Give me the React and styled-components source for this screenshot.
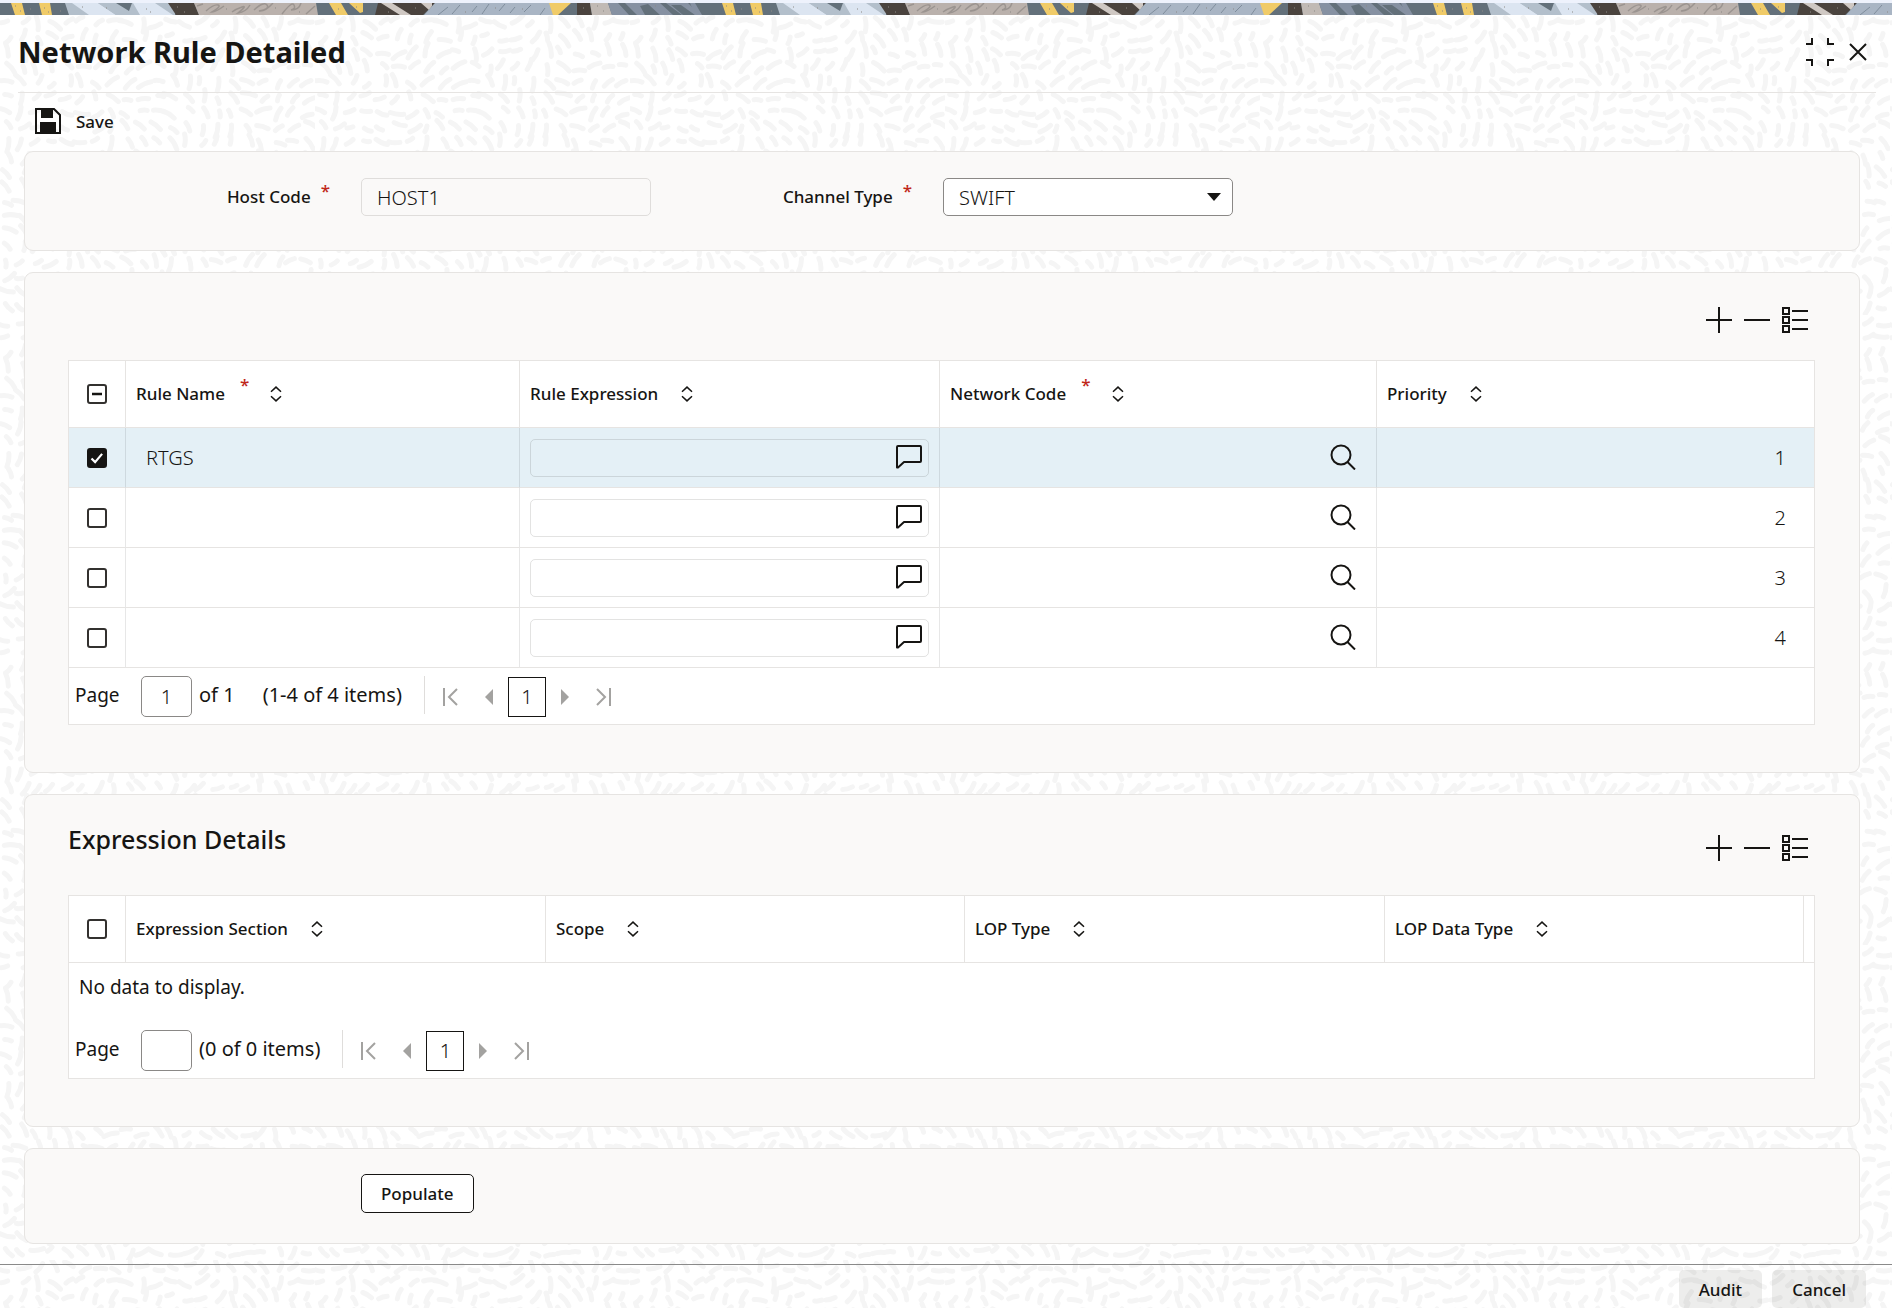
import React, { useEffect, useRef, useState } from 'react';
import styled, { createGlobalStyle } from 'styled-components';

const INK = '#161513';
const LINE = '#e6e4e2';
const MUTED = '#a3a2a0';

// faint brush strokes behind the page, one repeating tile
const TILE = 315;
const STEP = 15;

const brushTile = () => {
  const count = TILE / STEP;
  const turn = (2 * Math.PI) / TILE;
  let seed = 7;
  const random = () => {
    seed = (seed * 16807) % 2147483647;
    return seed / 2147483647;
  };
  let d = '';
  for (let row = 0; row < count; row += 1) {
    for (let col = 0; col < count; col += 1) {
      const x = col * STEP + random() * 7 + 4;
      const y = row * STEP + random() * 7 + 4;
      const angle =
        1.2 +
        1.3 * Math.sin(turn * 2 * x + 1.1 * Math.cos(turn * y)) +
        1.2 * Math.cos(turn * 2 * y + 1.4 * Math.sin(turn * x)) +
        (random() - 0.5) * 0.6;
      const half = 3 + random() * 4;
      const dx = Math.cos(angle) * half;
      const dy = Math.sin(angle) * half;
      const p = n => n.toFixed(1);
      d += `M${p(x - dx)} ${p(y - dy)}Q${p(x + dy / 4)} ${p(y - dx / 4)} ${p(
        x + dx
      )} ${p(y + dy)}`;
    }
  }
  const svg = `<svg xmlns="http://www.w3.org/2000/svg" width="${TILE}" height="${TILE}"><path d="${d}" fill="none" stroke="#f5f5f5" stroke-width="5" stroke-linecap="round"/></svg>`;
  return `data:image/svg+xml,${encodeURIComponent(svg)}`;
};

const BRUSH = brushTile();

const GlobalStyle = createGlobalStyle`
  *, *::before, *::after {
    box-sizing: border-box;
  }
  body {
    margin: 0;
    color: ${INK};
    background: #fff;
    font-family: 'Noto Sans', 'Open Sans', sans-serif;
    font-size: 17px;
  }
  button, input, select {
    font: inherit;
    color: inherit;
  }
`;

const Page = styled.div`
  display: flex;
  flex-direction: column;
  min-height: 100vh;
  background: #fff url("${BRUSH}");
`;

const Strip = styled.svg`
  display: block;
  width: 100%;
  height: 15px;
  flex: none;
`;

const Header = styled.header`
  display: flex;
  align-items: center;
  justify-content: space-between;
  height: 78px;
  margin: 0 16px 0 18px;
  padding-bottom: 3px;
  border-bottom: 1px solid ${LINE};
`;

const Title = styled.h1`
  margin: 0;
  font-size: 29px;
  line-height: 40px;
  font-weight: 700;
`;

const WindowActions = styled.div`
  display: flex;
  align-items: center;
  gap: 15px;
  padding-right: 9px;
`;

const IconButton = styled.button`
  display: flex;
  align-items: center;
  justify-content: center;
  padding: 0;
  border: 0;
  background: none;
  cursor: pointer;
`;

const Toolbar = styled.div`
  display: flex;
  align-items: center;
  height: 58px;
  padding: 0 35px 2px;
`;

const SaveButton = styled(IconButton)`
  gap: 15px;
  font-weight: 500;
`;

const Main = styled.main`
  display: flex;
  flex-direction: column;
  gap: 21px;
  margin: 0 32px 20px 24px;
`;

const Card = styled.section`
  border: 1px solid ${LINE};
  border-radius: 9px;
  background: #faf9f8;
`;

const FormCard = styled(Card)`
  display: grid;
  grid-template-columns: 336px 290px 292px 290px;
  align-items: center;
  padding: 26px 0 34px;
`;

const TableCard = styled(Card)`
  padding: 0 44px 47px 43px;
`;

const FieldLabel = styled.label`
  display: flex;
  justify-content: flex-end;
  gap: 10px;
  padding-right: 31px;
  line-height: 24px;
  font-weight: 500;
`;

const Required = styled.span`
  color: #c0271a;
  line-height: 12px;
`;

const TextInput = styled.input`
  width: 100%;
  height: 38px;
  padding: 0 15px;
  border: 1px solid #dfdddb;
  border-radius: 5px;
  background: transparent;
  font-size: 20px;
  font-weight: 300;
`;

const SelectBox = styled.div`
  position: relative;

  svg {
    position: absolute;
    top: 15px;
    right: 12px;
    pointer-events: none;
  }
`;

const Select = styled.select`
  width: 100%;
  height: 38px;
  padding: 0 15px;
  border: 1px solid #8a8886;
  border-radius: 5px;
  background: #fff;
  appearance: none;
  font-size: 20px;
  font-weight: 300;
`;

const CardHead = styled.div`
  display: flex;
  justify-content: space-between;
  align-items: flex-end;
  padding: ${({ $titled }) => ($titled ? '26px 0 33px' : '33px 0 26px')};
`;

const CardTitle = styled.h2`
  height: 41px;
  margin: 0;
  font-size: 25px;
  line-height: 36px;
  font-weight: 500;
`;

const CardActions = styled.div`
  display: flex;
  gap: 10px;
  margin-left: auto;
  padding-right: 6px;
`;

const Grid = styled.div`
  border: 1px solid ${LINE};
  background: #fff;
`;

const Table = styled.table`
  width: 100%;
  table-layout: fixed;
  border-collapse: separate;
  border-spacing: 0;
`;

const Col = styled.col`
  width: ${({ $width }) => ($width ? `${$width}px` : 'auto')};
`;

const HeadCell = styled.th`
  height: 67px;
  padding: 0 10px;
  border-bottom: 1px solid ${LINE};
  text-align: left;
  font-weight: 500;

  & + & {
    border-left: 1px solid ${LINE};
  }
`;

const HeadContent = styled.div`
  display: flex;
  align-items: center;
  gap: ${({ $required }) => ($required ? '15px' : '23px')};
  line-height: 24px;
`;

const HeadMark = styled(Required)`
  align-self: flex-start;
  margin-right: 6px;
  line-height: 6px;
`;

const Row = styled.tr`
  background: ${({ $selected }) => ($selected ? '#e4f0f6' : '#fff')};
`;

const Cell = styled.td`
  height: 60px;
  padding: 0 10px;
  border-bottom: 1px solid ${LINE};
  font-size: 20px;
  font-weight: 300;

  & + & {
    border-left: 1px solid rgba(22, 21, 19, 0.1);
  }
`;

const CellInput = styled.input`
  display: block;
  width: 100%;
  height: 38px;
  padding: 0 10px;
  border: 0;
  background: transparent;
  font-weight: inherit;
  text-align: ${({ $right }) => ($right ? 'right' : 'left')};
`;

const NumberCell = styled(Cell)`
  padding-right: 18px;
`;

const Expression = styled.div`
  display: flex;
  align-items: center;
  height: 38px;
  padding: 0 6px 2px 0;
  border: 1px solid rgba(22, 21, 19, 0.12);
  border-radius: 5px;
`;

const Lookup = styled.div`
  display: flex;
  align-items: center;
  padding: 0 10px 2px 0;
`;

const Check = styled.input`
  display: block;
  width: 20px;
  height: 20px;
  margin: 0 auto;
  border: 2px solid #33312f;
  border-radius: 3px;
  background: #fff center / 16px 16px no-repeat;
  appearance: none;

  &:checked {
    border-color: ${INK};
    background-color: ${INK};
    background-image: url("data:image/svg+xml,%3Csvg xmlns='http://www.w3.org/2000/svg' viewBox='0 0 16 16'%3E%3Cpath d='M2.5 8.5l3.6 3.6 7-8.2' fill='none' stroke='white' stroke-width='2.2'/%3E%3C/svg%3E");
  }

  &:indeterminate {
    background-image: url("data:image/svg+xml,%3Csvg xmlns='http://www.w3.org/2000/svg' viewBox='0 0 16 16'%3E%3Cpath d='M3 8h10' stroke='%23161513' stroke-width='2.4'/%3E%3C/svg%3E");
  }
`;

const Empty = styled.td`
  height: 59px;
  padding: 0 10px 12px;
  font-size: 19px;
`;

const Pager = styled.nav`
  display: flex;
  align-items: flex-start;
  height: 56px;
  padding: 8px 6px;
  font-size: 20px;
  line-height: 38px;
`;

const PageLabel = styled.label`
  width: 66px;
  font-size: 19px;
`;

const PageInput = styled.input`
  width: 51px;
  height: 41px;
  margin-right: 7px;
  border: 1px solid #8a8886;
  border-radius: 5px;
  background: #fff;
  text-align: center;
  font-weight: 300;
`;

const PageTotal = styled.span`
  margin-right: 28px;
`;

const Divider = styled.span`
  width: 1px;
  height: 38px;
  margin: 0 7px 0 22px;
  background: #dfdddb;
`;

const PageStep = styled(IconButton)`
  width: 38px;
  height: 42px;
`;

const PageNumber = styled.button`
  width: 38px;
  height: 40px;
  margin-top: 1px;
  padding: 0;
  border: 1px solid ${INK};
  background: #fff;
  font-weight: 300;
`;

const ActionCard = styled(Card)`
  padding: 25px 0 30px 336px;
`;

const OutlineButton = styled.button`
  display: block;
  height: 39px;
  padding: 0 19px;
  border: 1px solid ${INK};
  border-radius: 5px;
  background: #fff;
  font-weight: 500;
`;

const Footer = styled.footer`
  display: flex;
  justify-content: flex-end;
  gap: 10px;
  margin-top: auto;
  padding: 5px 26px 0;
  border-top: 1px solid #8a8a8a;
`;

const FooterButton = styled.button`
  height: 38px;
  padding: 0 20px;
  border: 0;
  border-radius: 5px;
  background: rgba(22, 21, 19, 0.08);
  font-weight: 500;
`;

const Icon = ({ w, h = w, children, ...rest }) => (
  <svg
    width={w}
    height={h}
    viewBox={`0 0 ${w} ${h}`}
    fill="none"
    stroke={INK}
    strokeWidth="2"
    aria-hidden="true"
    {...rest}
  >
    {children}
  </svg>
);

const CollapseIcon = () => (
  <Icon w={28}>
    <path d="M0 6h6V0M28 6h-6V0M0 22h6v6M28 22h-6v6" />
  </Icon>
);

const CloseIcon = () => (
  <Icon w={18}>
    <path d="M1 1l16 16M17 1L1 17" />
  </Icon>
);

const SaveIcon = () => (
  <Icon w={26}>
    <path d="M1 1h18l6 6v18H1z" />
    <path d="M6 0h12v10H6zM5 14h16v11H5z" fill={INK} stroke="none" />
  </Icon>
);

const PlusIcon = () => (
  <Icon w={28}>
    <path d="M1 14h26M14 1v26" />
  </Icon>
);

const MinusIcon = () => (
  <Icon w={28}>
    <path d="M1 14h26" />
  </Icon>
);

const ListIcon = () => (
  <Icon w={28}>
    <path d="M2 2h6v6H2zM2 11h6v6H2zM2 20h6v6H2zM11 5h16M11 14h16M11 23h16" />
  </Icon>
);

const CommentIcon = () => (
  <Icon w={26} h={24} strokeLinejoin="round">
    <path d="M2 1h22q1 0 1 1v14q0 1-1 1H8l-6 5.5H1V2q0-1 1-1z" />
  </Icon>
);

const SearchIcon = () => (
  <Icon w={26}>
    <circle cx="11" cy="11" r="9.5" />
    <path d="M17.5 18l7.5 7.5" />
  </Icon>
);

const SortIcon = () => (
  <Icon w={12} h={16} strokeWidth="1.5">
    <path d="M1 5.8l5-4.7 5 4.7M1 10.2l5 4.7 5-4.7" />
  </Icon>
);

const EdgeIcon = ({ last }) => (
  <Icon w={16} h={20} stroke={MUTED}>
    <path d={last ? 'M2 2l8 8-8 8M15 1v18' : 'M14 2l-8 8 8 8M1 1v18'} />
  </Icon>
);

const StepIcon = ({ next }) => (
  <Icon w={8} h={16} stroke="none" fill={MUTED}>
    <path d={next ? 'M0 0l8 8-8 8z' : 'M8 0L0 8l8 8z'} />
  </Icon>
);

const BannerStrip = () => (
  <Strip aria-hidden="true">
    <defs>
      <pattern id="banner" width="711" height="12" y="3" patternUnits="userSpaceOnUse">
        <rect width="711" height="12" fill="#63707a" />
        <path d="M65 0h110v12H69z" fill="#b3bfcb" />
        <path d="M72 0h26l18 12H89zM133 0h22l18 12h-33z" fill="#dce5f1" />
        <path d="M98 0h18l12 8 8 4h-20z" fill="#b3bfcb" />
        <path d="M116 0h16l-3 8z" fill="#63707a" />
        <path d="M11 0h11l3 12H15zM39 0h11l2 12H42zM329 0h12l7 12h-12zM349 0h14v9l-3 1z" fill="#f0cb68" />
        <path d="M168 0h26l5 12h-23z" fill="#4a433e" />
        <path d="M194 0h122l2 12H199z" fill="#bab1ac" />
        <path
          d="M197 3l6-2M206 8q8-7 12-6t-6 7q4 0 12-6M232 9q4-3 10-5t-4 6q8-1 12-8M254 7q10-9 13-5t-8 6q6 1 14-8M282 11q10-13 12-9t-3 5q8 0 10-7M306 11l9-8"
          fill="none"
          stroke="#9b9490"
          strokeWidth="1.5"
        />
        <path d="M378 0h57l-12 12h-48z" fill="#4a433e" />
        <path d="M381 0h11l19 12h-11zM421 0h11v3l-3 4z" fill="#cfc8c3" />
        <path d="M435 0h115l4 12H424z" fill="#a9b5c4" />
        <path
          d="M448 4l-10 8M460 2l-8 9M477 3l-5 6M489 1l-7 10M505 1l-6 7M515 4l-5 6M531 2l-7 7M545 5l-5 7"
          stroke="#7f8d9c"
        />
        <path d="M549 0h22l-13 12h-5z" fill="#f0cb68" />
        <path d="M577 0h13l2 12h-15z" fill="#4a433e" />
        <path d="M590 0h18l4 12h-20z" fill="#c1bab5" />
        <path d="M608 0h80l12 12h-88z" fill="#8691a2" />
        <path d="M618 0h7l12 12h-8zM640 3l8-2 12 11h-15zM660 0h6l16 12h-9zM671 2h10l14 10h-12z" fill="#63707a" />
        <path d="M690 0h5l7 12h-7z" fill="#8691a2" />
        <path
          d="M15 3h1M20 8h1M44 5h1M48 9h1M82 4h1M106 5h1M146 6h1M150 9h1M177 4h1M184 9h1M226 6h1M275 5h1M299 9h1M338 6h1M356 4h1M388 9h1M415 5h1M465 9h1M495 5h1M522 6h1M583 5h1M597 3h1M603 8h1M655 3h1M30 6h1M60 8h1"
          stroke="#8d8a86"
        />
      </pattern>
    </defs>
    <rect width="100%" height="3" fill="#eef2fc" />
    <rect y="3" width="100%" height="12" fill="url(#banner)" />
  </Strip>
);

const HeaderLabel = ({ title, required }) => (
  <HeadContent $required={required}>
    <span>{title}</span>
    {required && <HeadMark>*</HeadMark>}
    <IconButton aria-label={`Sort by ${title}`}>
      <SortIcon />
    </IconButton>
  </HeadContent>
);

const TableActions = () => (
  <CardActions>
    <IconButton aria-label="Add row">
      <PlusIcon />
    </IconButton>
    <IconButton aria-label="Delete row">
      <MinusIcon />
    </IconButton>
    <IconButton aria-label="Single record view">
      <ListIcon />
    </IconButton>
  </CardActions>
);

const TablePager = ({ id, page, total, summary }) => (
  <Pager aria-label="Pagination">
    <PageLabel htmlFor={id}>Page</PageLabel>
    <PageInput id={id} defaultValue={page} />
    {total && <PageTotal>{total}</PageTotal>}
    <span>{summary}</span>
    <Divider />
    <PageStep aria-label="First page">
      <EdgeIcon />
    </PageStep>
    <PageStep aria-label="Previous page">
      <StepIcon />
    </PageStep>
    <PageNumber>1</PageNumber>
    <PageStep aria-label="Next page">
      <StepIcon next />
    </PageStep>
    <PageStep aria-label="Last page">
      <EdgeIcon last />
    </PageStep>
  </Pager>
);

const initialRules = [
  { name: 'RTGS', priority: '1', selected: true },
  { name: '', priority: '2', selected: false },
  { name: '', priority: '3', selected: false },
  { name: '', priority: '4', selected: false }
];

const RulesTable = () => {
  const [rules, setRules] = useState(initialRules);
  const allRef = useRef(null);
  const picked = rules.filter(rule => rule.selected).length;
  const all = picked === rules.length;

  useEffect(() => {
    allRef.current.indeterminate = picked > 0 && !all;
  }, [picked, all]);

  const toggle = index =>
    setRules(
      rules.map((rule, i) =>
        i === index ? { ...rule, selected: !rule.selected } : rule
      )
    );

  return (
    <Table>
      <colgroup>
        <Col $width={56} />
        <Col $width={394} />
        <Col $width={420} />
        <Col $width={437} />
        <Col />
      </colgroup>
      <thead>
        <tr>
          <HeadCell>
            <Check
              type="checkbox"
              ref={allRef}
              aria-label="Select all rules"
              checked={all}
              onChange={() =>
                setRules(rules.map(rule => ({ ...rule, selected: !all })))
              }
            />
          </HeadCell>
          <HeadCell>
            <HeaderLabel title="Rule Name" required />
          </HeadCell>
          <HeadCell>
            <HeaderLabel title="Rule Expression" />
          </HeadCell>
          <HeadCell>
            <HeaderLabel title="Network Code" required />
          </HeadCell>
          <HeadCell>
            <HeaderLabel title="Priority" />
          </HeadCell>
        </tr>
      </thead>
      <tbody>
        {rules.map((rule, index) => (
          <Row key={rule.priority} $selected={rule.selected}>
            <Cell>
              <Check
                type="checkbox"
                aria-label={`Select rule ${index + 1}`}
                checked={rule.selected}
                onChange={() => toggle(index)}
              />
            </Cell>
            <Cell>
              <CellInput aria-label="Rule Name" defaultValue={rule.name} />
            </Cell>
            <Cell>
              <Expression>
                <CellInput aria-label="Rule Expression" readOnly />
                <IconButton aria-label="Open expression">
                  <CommentIcon />
                </IconButton>
              </Expression>
            </Cell>
            <Cell>
              <Lookup>
                <CellInput aria-label="Network Code" />
                <IconButton aria-label="Search network code">
                  <SearchIcon />
                </IconButton>
              </Lookup>
            </Cell>
            <NumberCell>
              <CellInput
                $right
                aria-label="Priority"
                defaultValue={rule.priority}
              />
            </NumberCell>
          </Row>
        ))}
      </tbody>
    </Table>
  );
};

const ExpressionTable = () => (
  <Table>
    <colgroup>
      <Col $width={56} />
      <Col $width={420} />
      <Col $width={419} />
      <Col $width={420} />
      <Col />
      <Col $width={11} />
    </colgroup>
    <thead>
      <tr>
        <HeadCell>
          <Check type="checkbox" aria-label="Select all expressions" />
        </HeadCell>
        {['Expression Section', 'Scope', 'LOP Type', 'LOP Data Type'].map(
          title => (
            <HeadCell key={title}>
              <HeaderLabel title={title} />
            </HeadCell>
          )
        )}
        <HeadCell />
      </tr>
    </thead>
    <tbody>
      <tr>
        <Empty colSpan="6">No data to display.</Empty>
      </tr>
    </tbody>
  </Table>
);

const App = () => (
  <Page>
    <GlobalStyle />
    <BannerStrip />
    <Header>
      <Title>Network Rule Detailed</Title>
      <WindowActions>
        <IconButton aria-label="Restore">
          <CollapseIcon />
        </IconButton>
        <IconButton aria-label="Close">
          <CloseIcon />
        </IconButton>
      </WindowActions>
    </Header>
    <Toolbar>
      <SaveButton>
        <SaveIcon />
        Save
      </SaveButton>
    </Toolbar>
    <Main>
      <FormCard>
        <FieldLabel htmlFor="host">
          Host Code <Required>*</Required>
        </FieldLabel>
        <TextInput id="host" defaultValue="HOST1" readOnly />
        <FieldLabel htmlFor="channel">
          Channel Type <Required>*</Required>
        </FieldLabel>
        <SelectBox>
          <Select id="channel" defaultValue="SWIFT">
            <option>SWIFT</option>
          </Select>
          <Icon w={14} h={8} fill={INK} stroke="none">
            <path d="M0 0h14L7 8z" />
          </Icon>
        </SelectBox>
      </FormCard>
      <TableCard>
        <CardHead>
          <TableActions />
        </CardHead>
        <Grid>
          <RulesTable />
          <TablePager
            id="rules-page"
            page="1"
            total="of 1"
            summary="(1-4 of 4 items)"
          />
        </Grid>
      </TableCard>
      <TableCard>
        <CardHead $titled>
          <CardTitle>Expression Details</CardTitle>
          <TableActions />
        </CardHead>
        <Grid>
          <ExpressionTable />
          <TablePager id="expressions-page" summary="(0 of 0 items)" />
        </Grid>
      </TableCard>
      <ActionCard>
        <OutlineButton>Populate</OutlineButton>
      </ActionCard>
    </Main>
    <Footer>
      <FooterButton>Audit</FooterButton>
      <FooterButton>Cancel</FooterButton>
    </Footer>
  </Page>
);

export default App;
